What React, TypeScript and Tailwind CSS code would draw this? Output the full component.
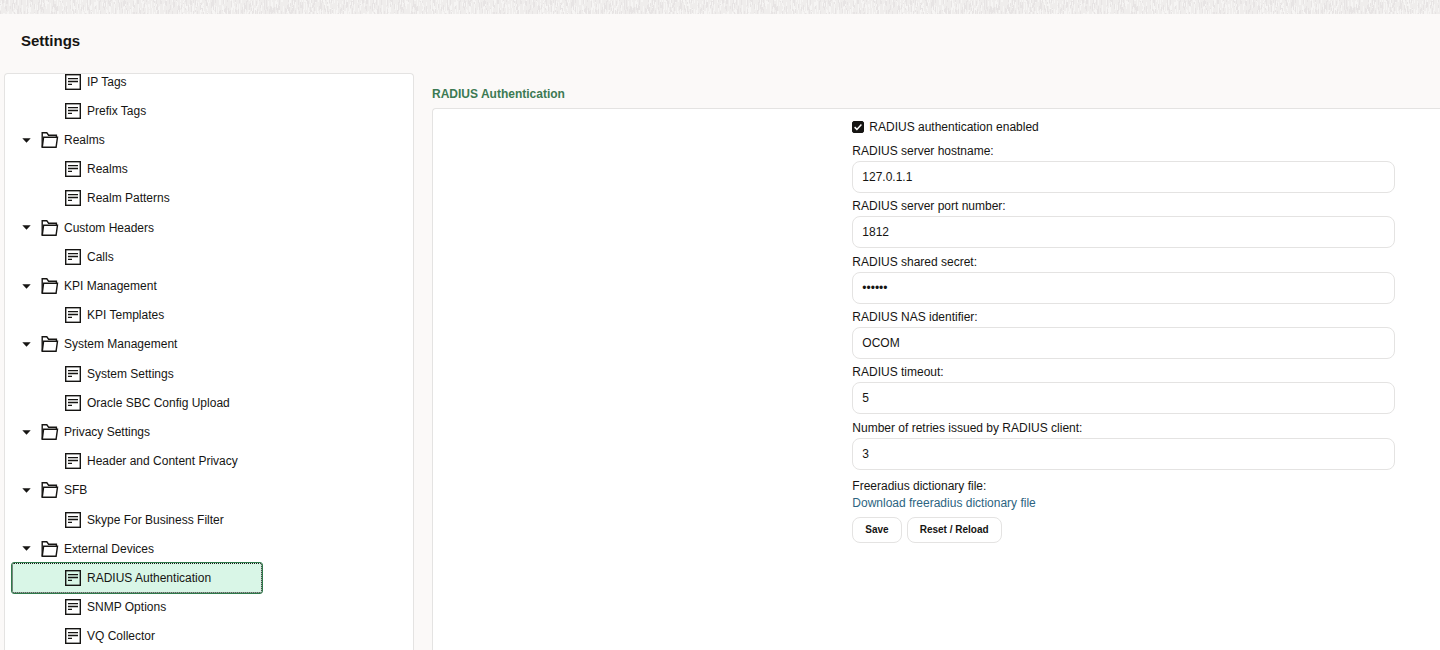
import React from "react";

type Node = { label: string; folder?: boolean };

const nodes: Node[] = [
  { label: "IP Tags" },
  { label: "Prefix Tags" },
  { label: "Realms", folder: true },
  { label: "Realms" },
  { label: "Realm Patterns" },
  { label: "Custom Headers", folder: true },
  { label: "Calls" },
  { label: "KPI Management", folder: true },
  { label: "KPI Templates" },
  { label: "System Management", folder: true },
  { label: "System Settings" },
  { label: "Oracle SBC Config Upload" },
  { label: "Privacy Settings", folder: true },
  { label: "Header and Content Privacy" },
  { label: "SFB", folder: true },
  { label: "Skype For Business Filter" },
  { label: "External Devices", folder: true },
  { label: "RADIUS Authentication" },
  { label: "SNMP Options" },
  { label: "VQ Collector" },
];

const fields = [
  { id: "host", label: "RADIUS server hostname:", value: "127.0.1.1" },
  { id: "port", label: "RADIUS server port number:", value: "1812" },
  { id: "secret", label: "RADIUS shared secret:", value: "secret", type: "password" },
  { id: "nas", label: "RADIUS NAS identifier:", value: "OCOM" },
  { id: "timeout", label: "RADIUS timeout:", value: "5" },
  { id: "retries", label: "Number of retries issued by RADIUS client:", value: "3" },
];

/* Short vertical strokes for the banner weave, spread by a small seeded generator. */
let seed = 7;
const rand = () => {
  seed = (seed * 16807) % 2147483647;
  return seed / 2147483647;
};
const strokes = Array.from({ length: 900 }, (_, i) => {
  const x = Math.floor(rand() * 360);
  const y = Math.floor(rand() * 18) - 4;
  const len = 3 + Math.floor(rand() * 4);
  return { d: `M${x + 0.5} ${y}v${len}`, dark: i % 2 === 0 };
});

function Banner() {
  return (
    <svg className="block h-3.5 w-full shrink-0 bg-[#efedec]" aria-hidden="true">
      <defs>
        <pattern id="weave" width="360" height="14" patternUnits="userSpaceOnUse">
          {strokes.map((s, i) => (
            <path key={i} d={s.d} stroke={s.dark ? "#e7e4e4" : "#f6f5f4"} strokeWidth="1" fill="none" />
          ))}
        </pattern>
      </defs>
      <rect width="100%" height="100%" fill="url(#weave)" />
    </svg>
  );
}

function PageIcon() {
  return (
    <svg className="size-4 shrink-0" viewBox="0 0 16 16" fill="none" stroke="#161513" aria-hidden="true">
      <rect x="0.7" y="0.7" width="14.6" height="14.6" strokeWidth="1.4" />
      <path d="M3 4.6h10M3 7.5h10M3 10.4h4" strokeWidth="1.3" />
    </svg>
  );
}

function FolderIcon() {
  return (
    <svg className="h-4 w-[18px] shrink-0" viewBox="0 0 18 16" fill="none" stroke="#161513" strokeWidth="1.4" aria-hidden="true">
      <path d="M1.2 15.2V.8h4.6l1.8 2.4h7.8v2" />
      <path d="M1.3 15.2L2.6 5.2h13.9l-1.4 10z" />
    </svg>
  );
}

function TreeRow({ node }: { node: Node }) {
  const selected = node.label === "RADIUS Authentication";
  return (
    <li
      role="treeitem"
      aria-level={node.folder ? 1 : 2}
      aria-selected={selected}
      className="flex min-h-[29px] flex-1"
    >
      {node.folder ? (
        <button type="button" className="flex w-full items-center pl-[17px]">
          <svg className="mr-[10px] h-[5px] w-[9px] shrink-0" viewBox="0 0 9 5" aria-hidden="true">
            <path d="M0.3 0.3h8.4L4.5 4.7z" fill="#161513" />
          </svg>
          <FolderIcon />
          <span className="ml-[5px]">{node.label}</span>
        </button>
      ) : (
        <a
          href="#"
          className={
            selected
              ? "-my-px ml-[6px] flex w-[252px] items-center rounded-[3px] border border-[#2f7a4b] bg-[#d9f6e7] pl-[53px] outline-1 -outline-offset-2 outline-dotted outline-[#161513]"
              : "flex w-full items-center pl-[60px]"
          }
        >
          <PageIcon />
          <span className="ml-1.5">{node.label}</span>
        </a>
      )}
    </li>
  );
}

export default function App() {
  return (
    <div className="flex h-screen flex-col overflow-hidden bg-[#fbf9f8] font-['Liberation_Sans',Arial,sans-serif] text-[12px] leading-4 text-[#161513]">
      <Banner />
      <header className="flex h-[59px] shrink-0 items-center px-[21px] pb-1.5">
        <h1 className="text-[15px] leading-5 font-bold">Settings</h1>
      </header>
      <div className="flex min-h-0 flex-1">
        <nav
          aria-label="Settings"
          className="ml-1 flex w-[410px] shrink-0 flex-col overflow-hidden rounded-t-[4px] border border-b-0 border-[#e4e3e2] bg-white"
        >
          <ul role="tree" className="-mt-[7px] -mb-px flex flex-1 flex-col">
            {nodes.map((node, i) => (
              <TreeRow key={i} node={node} />
            ))}
          </ul>
        </nav>
        <main className="ml-[18px] flex flex-1 flex-col pt-[13px]">
          <h2 className="mb-1.5 leading-4 font-bold text-[#3c7a53]">RADIUS Authentication</h2>
          <form className="flex-1 rounded-tl-[4px] border-t border-l border-[#e4e3e2] bg-white pt-2.5 pr-[45px] pl-[41.6%]">
            <label className="flex h-4 items-center gap-[5px]">
              <span className="grid">
                <input
                  type="checkbox"
                  defaultChecked
                  className="peer col-start-1 row-start-1 size-3 appearance-none rounded-[2px] border border-[#161513] bg-white checked:bg-[#161513]"
                />
                <svg
                  className="pointer-events-none invisible col-start-1 row-start-1 size-3 peer-checked:visible"
                  viewBox="0 0 12 12"
                  aria-hidden="true"
                >
                  <path d="M2.6 6.1l2.3 2.3 4.5-4.9" fill="none" stroke="#fff" strokeWidth="1.5" />
                </svg>
              </span>
              RADIUS authentication enabled
            </label>
            <div className="mt-2 flex min-h-[332px] flex-col">
              {fields.map((f) => (
                <div key={f.id} className="flex-1">
                  <label htmlFor={f.id} className="block h-[18px] leading-4">
                    {f.label}
                  </label>
                  <input
                    id={f.id}
                    type={f.type ?? "text"}
                    defaultValue={f.value}
                    className="block h-8 w-full rounded-lg border border-[#e4e3e2] bg-white px-[9px]"
                  />
                </div>
              ))}
            </div>
            <p className="mt-[3px] leading-[17px]">Freeradius dictionary file:</p>
            <a href="#" className="block leading-[17px] text-[#2c6481]">
              Download freeradius dictionary file
            </a>
            <div className="mt-[5px] flex gap-[5px] text-[10px] font-bold">
              <button type="button" className="h-[26px] rounded-lg border border-[#e4e3e2] px-3">
                Save
              </button>
              <button type="button" className="h-[26px] rounded-lg border border-[#e4e3e2] px-3">
                Reset / Reload
              </button>
            </div>
          </form>
        </main>
      </div>
    </div>
  );
}
